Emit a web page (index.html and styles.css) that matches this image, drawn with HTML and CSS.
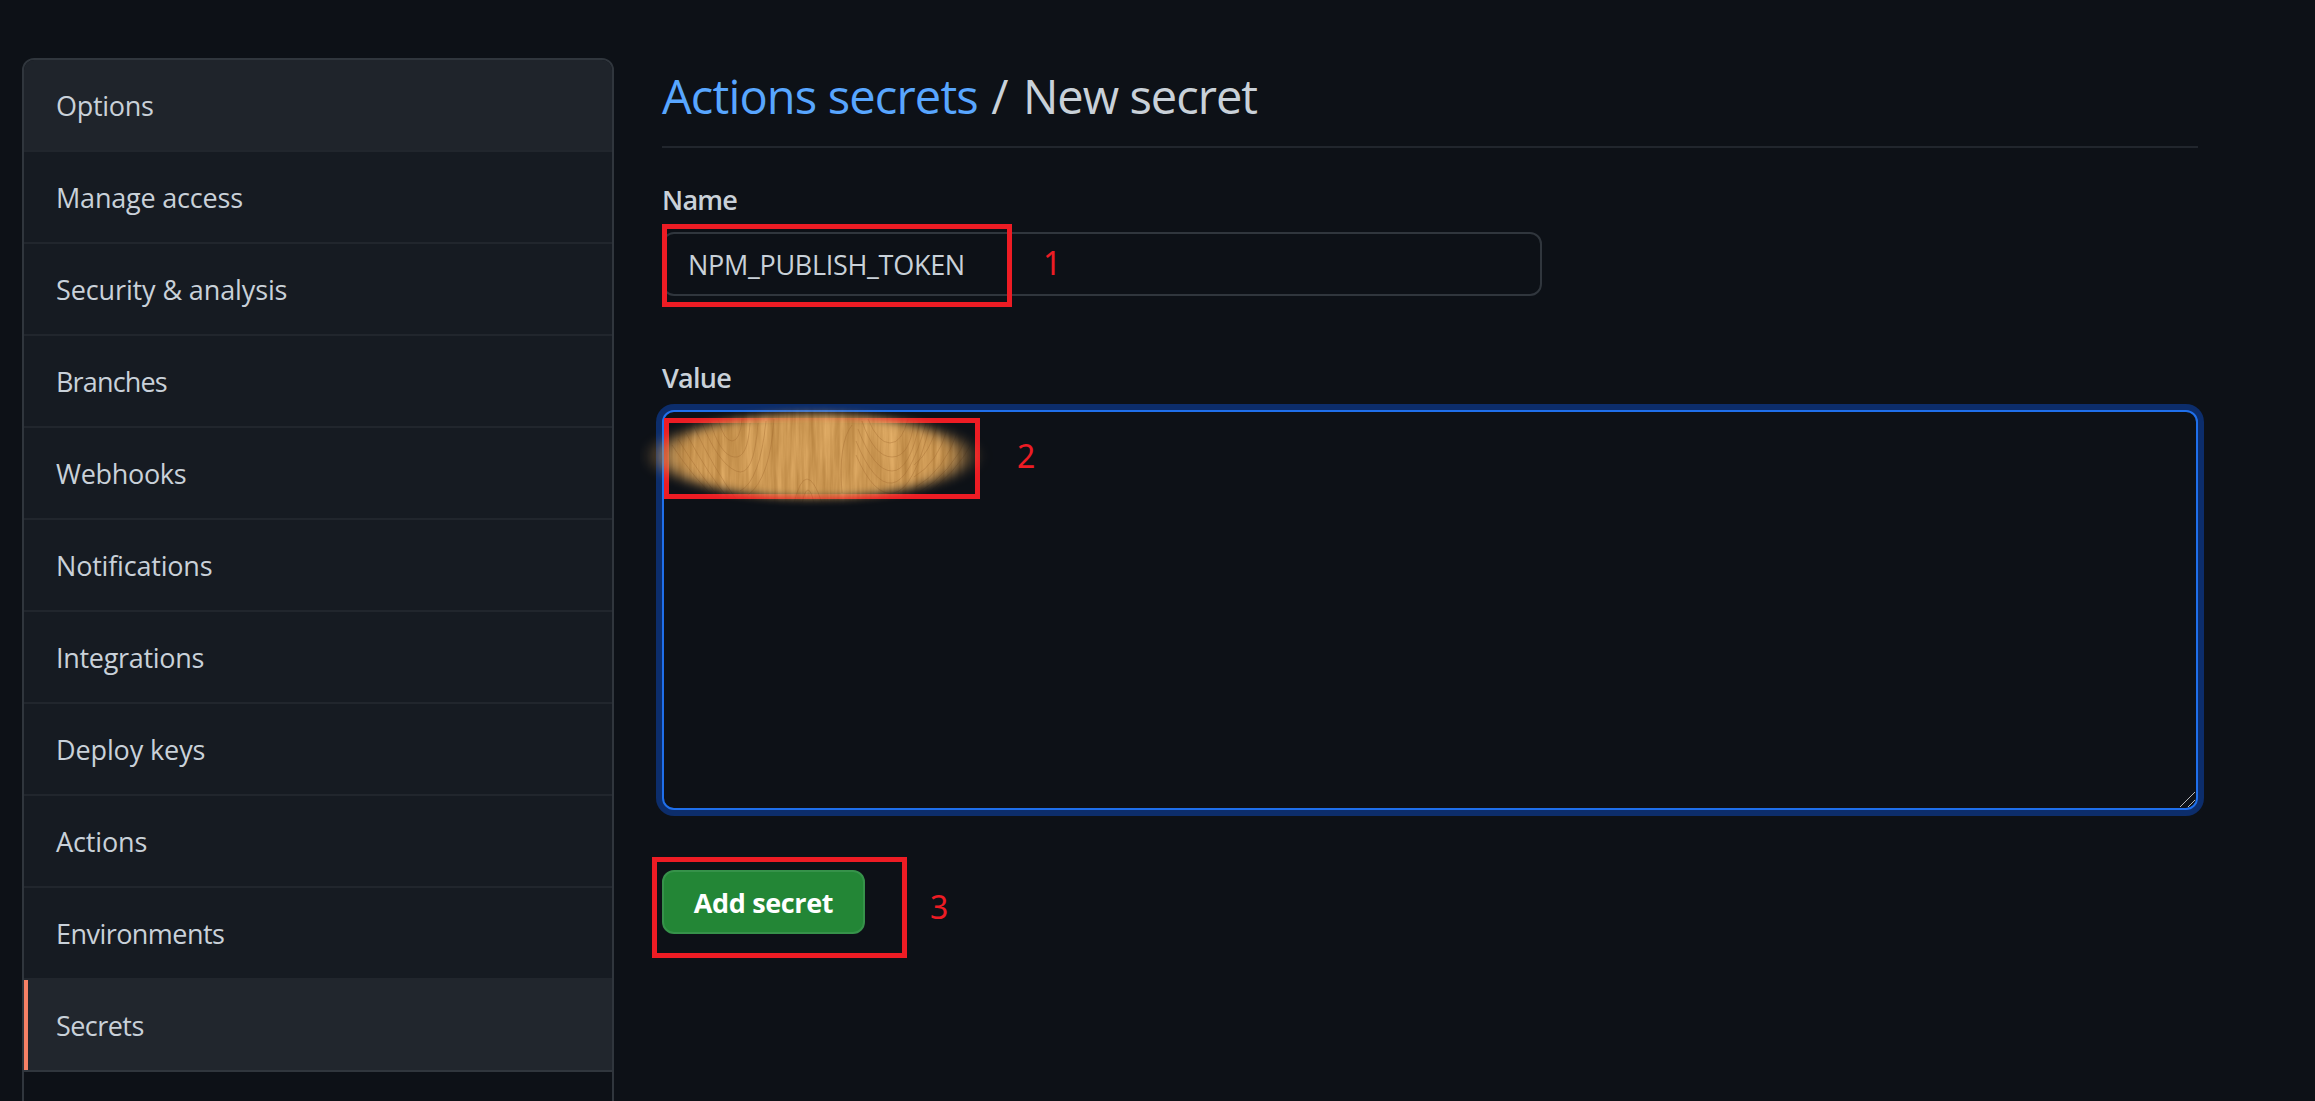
FILE: index.html
```html
<!DOCTYPE html>
<html lang="en">
<head>
<meta charset="utf-8">
<title>New secret</title>
<link rel="stylesheet" href="styles.css">
</head>
<body>
<div class="page">
  <aside class="sidebar">
    <nav class="menu">
      <a class="menu-item hovered" href="#">Options</a>
      <a class="menu-item normal" href="#">Manage access</a>
      <a class="menu-item wide" href="#">Security &amp; analysis</a>
      <a class="menu-item narrow" href="#">Branches</a>
      <a class="menu-item" href="#">Webhooks</a>
      <a class="menu-item normal" href="#">Notifications</a>
      <a class="menu-item" href="#">Integrations</a>
      <a class="menu-item wide" href="#">Deploy keys</a>
      <a class="menu-item wide" href="#">Actions</a>
      <a class="menu-item snug" href="#">Environments</a>
      <a class="menu-item snug selected" href="#">Secrets</a>
    </nav>
  </aside>
  <main class="content">
    <h2 class="heading"><a href="#">Actions secrets</a> <span class="slash">/</span> <span class="current">New secret</span></h2>
    <form class="form">
      <label class="label" for="name">Name</label>
      <div class="field name-field">
        <input class="input" id="name" type="text" value="NPM_PUBLISH_TOKEN">
        <span class="mark mark-name"></span>
        <span class="step step-1">1</span>
      </div>
      <label class="label" for="value">Value</label>
      <div class="field value-field">
        <textarea class="textarea" id="value"></textarea>
        <svg class="grip" width="20" height="20" viewBox="0 0 20 20"><path d="M3 18 18 3M11 18 18 11" stroke="#b4b6b9" stroke-width="1" fill="none"/></svg>
        <span class="mark mark-value"></span>
        <svg class="wood" width="360" height="116" viewBox="0 0 360 116">
          <defs>
            <filter id="grain" x="0" y="0" width="100%" height="100%" color-interpolation-filters="sRGB">
              <feTurbulence type="fractalNoise" baseFrequency="0.16 0.012" numOctaves="4" seed="8"/>
              <feColorMatrix values="0.24 0 0 0 0.68  0.24 0 0 0 0.475  0.22 0 0 0 0.215  0 0 0 0 1"/>
            </filter>
            <filter id="soft" x="-20%" y="-30%" width="140%" height="160%"><feGaussianBlur stdDeviation="12 4"/></filter>
            <mask id="oval"><ellipse cx="173" cy="59" rx="151" ry="42" fill="#fff" filter="url(#soft)"/></mask>
          </defs>
          <g mask="url(#oval)">
            <rect width="360" height="116" filter="url(#grain)"/>
            <g fill="none" stroke="#a06a30" stroke-opacity=".38">
              <path d="M32 48q22 34 48 58M38 42q24 40 48 66M46 36q22 42 46 70M54 30q20 42 42 72M62 26q16 40 34 48t22-48M70 24q10 34 24 36t16-34M78 22q6 22 14 22t10-22M100 94q20-10 26-70M108 98q22-16 26-76"/>
              <path d="M228 22q10 24 22 24t18-24M222 24q12 36 30 36t22-36M218 32q16 42 34 42t28-50M216 44q18 44 36 42t34-60M216 58q18 42 38 38t36-68M154 106q12-48 28 0M162 106q6-26 12 0M202 96q-4-50 10-68"/>
              <path d="M334 42q-18 36-54 60M328 38q-16 38-50 58M318 34q-14 40-42 56M308 30q-10 36-34 50M298 26q-8 30-24 42"/>
            </g>
          </g>
        </svg>
        <span class="step step-2">2</span>
      </div>
      <div class="field actions">
        <button class="button" type="button">Add secret</button>
        <span class="mark mark-button"></span>
        <span class="step step-3">3</span>
      </div>
    </form>
  </main>
</div>
</body>
</html>
```
FILE: styles.css
```css
* { box-sizing: border-box; }

body {
  margin: 0;
  background: #0d1117;
  color: #c9d1d9;
  font: 28px/42px "Open Sans", "Noto Sans", sans-serif;
}

a { color: inherit; text-decoration: none; }

.page {
  display: flex;
  gap: 48px;
  height: 1101px;
  padding: 58px 117px 0 22px;
  overflow: hidden;
}

.sidebar {
  flex: none;
  width: 592px;
  height: 1100px;
  border: 2px solid #30363d;
  border-radius: 12px;
  overflow: hidden;
}

.menu-item {
  display: flex;
  align-items: center;
  height: 92px;
  padding: 2px 0 0 32px;
  background: #161b22;
  border-bottom: 2px solid #21262d;
  font-size: 27px;
  letter-spacing: -0.3px;
}

.menu-item.wide { letter-spacing: -0.12px; }
.menu-item.normal { letter-spacing: -0.2px; }
.menu-item.snug { letter-spacing: -0.55px; }
.menu-item.narrow { letter-spacing: -0.85px; }

.menu-item.hovered { background: #1f242b; }

.menu-item.selected {
  background: #21262d;
  border-bottom-color: #30363d;
  box-shadow: inset 4px 0 #f78166;
}

.content { flex: 1; }

.heading {
  height: 90px;
  margin: 0;
  padding-top: 2px;
  border-bottom: 2px solid #21262d;
  font-size: 47px;
  font-weight: 400;
  line-height: 72px;
  letter-spacing: -0.85px;
}

.heading a { color: #58a6ff; }
.slash { margin: 0 4px 0 2px; }
.current { letter-spacing: -1px; }

.form { display: flex; flex-direction: column; padding-top: 31px; }

.label {
  height: 42px;
  margin-bottom: 11px;
  font-size: 27px;
  font-weight: 650;
  letter-spacing: -0.75px;
}

.field { position: relative; }

.name-field { height: 64px; margin-bottom: 61px; }

.input {
  display: block;
  width: 880px;
  height: 64px;
  padding: 0 24px;
  background: #0d1117;
  border: 2px solid #30363d;
  border-radius: 12px;
  color: #c9d1d9;
  font: inherit;
  font-size: 27px;
  letter-spacing: -0.3px;
  outline: 0;
}

.value-field { height: 402px; margin-bottom: 58px; }

.textarea {
  display: block;
  width: 100%;
  height: 400px;
  background: #0d1117;
  border: 2px solid #1f6feb;
  border-radius: 12px;
  box-shadow: 0 0 0 6px #0c2d6b;
  outline: 0;
  resize: none;
}

.grip { position: absolute; right: 1px; bottom: 3px; }

.button {
  width: 203px;
  height: 64px;
  padding: 2px 0 0;
  background: #238636;
  border: 2px solid #36924a;
  border-radius: 12px;
  color: #fff;
  font: inherit;
  font-size: 27px;
  font-weight: 670;
  letter-spacing: -0.35px;
}

/* Red annotations laid over the form */
.mark { position: absolute; border: 5px solid #ed1c24; }
.mark-name { left: 0; top: -8px; width: 350px; height: 83px; }
.mark-value { left: 2px; top: 8px; width: 316px; height: 81px; }
.mark-button { left: -10px; top: -13px; width: 255px; height: 101px; }

.step {
  position: absolute;
  color: #ed1c24;
  font: 32px/40px "Noto Sans", sans-serif;
}
.step-1 { left: 381px; top: 11px; }
.step-2 { left: 355px; top: 26px; }
.step-3 { left: 268px; top: 17px; }

.wood { position: absolute; left: -22px; top: -13px; }
```
